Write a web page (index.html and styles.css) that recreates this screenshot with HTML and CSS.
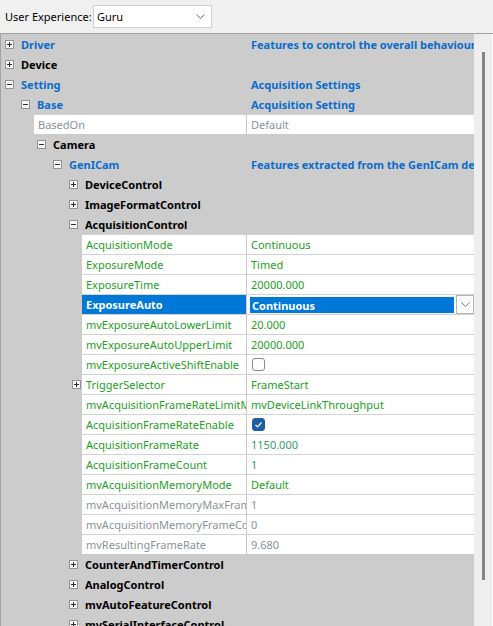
FILE: index.html
```html
<!DOCTYPE html>
<html>
<head>
<meta charset="utf-8">
<link rel="stylesheet" href="styles.css">
</head>
<body>
<svg class="defs" width="0" height="0">
  <symbol id="plus" viewBox="0 0 9 9"><rect x="0.5" y="0.5" width="8" height="8" fill="#f6f6f6" stroke="#939393"/><path d="M2 4.5h5M4.5 2v5" stroke="#2b2b2b"/></symbol>
  <symbol id="minus" viewBox="0 0 9 9"><rect x="0.5" y="0.5" width="8" height="8" fill="#f6f6f6" stroke="#939393"/><path d="M2 4.5h5" stroke="#2b2b2b"/></symbol>
</svg>
<div class="toolbar">
  <span class="label">User Experience:</span>
  <div class="combo"><span>Guru</span><svg class="chev" width="9" height="6" viewBox="0 0 9 6"><path d="M0.5 0.5l4 4 4-4" fill="none" stroke="#6e6e6e"/></svg></div>
</div>
<div class="tree">
  <div class="rows">
    <div class="row cat l0 blue"><div class="name"><svg class="exp"><use href="#plus"/></svg>Driver</div><div class="value">Features to control the overall behaviour of the driver</div></div>
    <div class="row cat l0"><div class="name"><svg class="exp"><use href="#plus"/></svg>Device</div><div class="value"></div></div>
    <div class="row cat l0 blue"><div class="name"><svg class="exp"><use href="#minus"/></svg>Setting</div><div class="value">Acquisition Settings</div></div>
    <div class="row cat l1 blue"><div class="name"><svg class="exp"><use href="#minus"/></svg>Base</div><div class="value">Acquisition Setting</div></div>
    <div class="row prop p2 ro"><div class="gutter"></div><div class="name">BasedOn</div><div class="value">Default</div></div>
    <div class="row cat l2"><div class="name"><svg class="exp"><use href="#minus"/></svg>Camera</div><div class="value"></div></div>
    <div class="row cat l3 blue"><div class="name"><svg class="exp"><use href="#minus"/></svg>GenICam</div><div class="value">Features extracted from the GenICam description</div></div>
    <div class="row cat l4"><div class="name"><svg class="exp"><use href="#plus"/></svg>DeviceControl</div><div class="value"></div></div>
    <div class="row cat l4"><div class="name"><svg class="exp"><use href="#plus"/></svg>ImageFormatControl</div><div class="value"></div></div>
    <div class="row cat l4"><div class="name"><svg class="exp"><use href="#minus"/></svg>AcquisitionControl</div><div class="value"></div></div>
    <div class="row prop p5"><div class="gutter"></div><div class="name">AcquisitionMode</div><div class="value">Continuous</div></div>
    <div class="row prop p5"><div class="gutter"></div><div class="name">ExposureMode</div><div class="value">Timed</div></div>
    <div class="row prop p5"><div class="gutter"></div><div class="name">ExposureTime</div><div class="value">20000.000</div></div>
    <div class="row prop p5 selected"><div class="gutter"></div><div class="name">ExposureAuto</div><div class="value"><div class="edit">Continuous</div><div class="dropbtn"><svg width="9" height="6" viewBox="0 0 9 6"><path d="M0.5 0.5l4 4 4-4" fill="none" stroke="#7a7a7a"/></svg></div></div></div>
    <div class="row prop p5"><div class="gutter"></div><div class="name">mvExposureAutoLowerLimit</div><div class="value">20.000</div></div>
    <div class="row prop p5"><div class="gutter"></div><div class="name">mvExposureAutoUpperLimit</div><div class="value">20000.000</div></div>
    <div class="row prop p5"><div class="gutter"></div><div class="name">mvExposureActiveShiftEnable</div><div class="value"><span class="check"></span></div></div>
    <div class="row prop p5"><div class="gutter"><svg class="exp"><use href="#plus"/></svg></div><div class="name">TriggerSelector</div><div class="value">FrameStart</div></div>
    <div class="row prop p5"><div class="gutter"></div><div class="name">mvAcquisitionFrameRateLimitMode</div><div class="value">mvDeviceLinkThroughput</div></div>
    <div class="row prop p5"><div class="gutter"></div><div class="name">AcquisitionFrameRateEnable</div><div class="value"><span class="check on"><svg width="13" height="13" viewBox="0 0 13 13"><path d="M3.5 6.8l2 2 4-4.3" fill="none" stroke="#fff" stroke-width="1.2"/></svg></span></div></div>
    <div class="row prop p5"><div class="gutter"></div><div class="name">AcquisitionFrameRate</div><div class="value teal">1150.000</div></div>
    <div class="row prop p5"><div class="gutter"></div><div class="name">AcquisitionFrameCount</div><div class="value teal">1</div></div>
    <div class="row prop p5"><div class="gutter"></div><div class="name">mvAcquisitionMemoryMode</div><div class="value">Default</div></div>
    <div class="row prop p5 ro"><div class="gutter"></div><div class="name">mvAcquisitionMemoryMaxFrameCount</div><div class="value">1</div></div>
    <div class="row prop p5 ro"><div class="gutter"></div><div class="name">mvAcquisitionMemoryFrameCount</div><div class="value">0</div></div>
    <div class="row prop p5 ro"><div class="gutter"></div><div class="name">mvResultingFrameRate</div><div class="value">9.680</div></div>
    <div class="row cat l4"><div class="name"><svg class="exp"><use href="#plus"/></svg>CounterAndTimerControl</div><div class="value"></div></div>
    <div class="row cat l4"><div class="name"><svg class="exp"><use href="#plus"/></svg>AnalogControl</div><div class="value"></div></div>
    <div class="row cat l4"><div class="name"><svg class="exp"><use href="#plus"/></svg>mvAutoFeatureControl</div><div class="value"></div></div>
    <div class="row cat l4"><div class="name"><svg class="exp"><use href="#plus"/></svg>mvSerialInterfaceControl</div><div class="value"></div></div>
  </div>
  <div class="scroll"><div class="thumb"></div></div>
</div>
</body>
</html>
```
FILE: styles.css
```css
html, body {
  margin: 0;
  padding: 0;
}
body {
  width: 493px;
  height: 626px;
  overflow: hidden;
  background: #f0f0f0;
  font-family: "Noto Sans", "DejaVu Sans", sans-serif;
  font-size: 11px;
  color: #000;
}
.defs {
  position: absolute;
  width: 0;
  height: 0;
}
.toolbar {
  height: 33px;
  display: flex;
  align-items: center;
  padding-left: 5px;
  box-sizing: border-box;
}
.label {
  width: 88px;
  white-space: nowrap;
}
.combo {
  width: 119px;
  height: 23px;
  box-sizing: border-box;
  border: 1px solid #d0d0d0;
  background: #fff;
  display: flex;
  align-items: center;
  justify-content: space-between;
  padding: 0 6px 0 3px;
}
.chev {
  display: block;
}
.tree {
  display: flex;
  height: 593px;
  border-top: 1px solid #a3a3a3;
  border-left: 1px solid #a3a3a3;
  box-sizing: border-box;
}
.rows {
  width: 473px;
  flex: none;
  background: #cccccc;
  overflow: hidden;
}
.scroll {
  width: 19px;
  flex: none;
  background: #eeeeee;
  border-right: 1px solid #ffffff;
  box-sizing: border-box;
  padding-top: 18px;
  padding-left: 8px;
}
.thumb {
  width: 3px;
  height: 528px;
  background: #858585;
}
.row {
  display: flex;
  height: 20px;
  white-space: nowrap;
}
.name {
  flex: 1;
  min-width: 0;
  display: flex;
  align-items: center;
  overflow: hidden;
}
.value {
  width: 228px;
  flex: none;
  display: flex;
  align-items: center;
  overflow: hidden;
  box-sizing: border-box;
}
.exp {
  width: 9px;
  height: 9px;
  flex: none;
  shape-rendering: crispEdges;
}
.cat .name {
  font-weight: bold;
}
.cat .exp {
  margin-right: 7px;
}
.cat .value {
  padding-left: 5px;
  font-weight: bold;
}
.blue .name, .blue .value {
  color: #0a6dcc;
}
.l0 .name { padding-left: 4px; }
.l1 .name { padding-left: 20px; }
.l2 .name { padding-left: 36px; }
.l3 .name { padding-left: 52px; }
.l4 .name { padding-left: 68px; }

.gutter {
  flex: none;
  display: flex;
  align-items: center;
  justify-content: flex-end;
  padding-right: 1px;
  box-sizing: border-box;
}
.p2 .gutter { width: 33px; }
.p5 .gutter { width: 81px; }
.prop .name, .prop .value {
  background: #fff;
  border-top: 1px solid #d3d3d3;
  color: #22a022;
}
.prop .name {
  padding-left: 4px;
}
.prop .value {
  border-left: 1px solid #cbcbcb;
  padding-left: 4px;
}
.prop .value.teal {
  color: #3a9a6a;
}
.ro .name, .ro .value {
  color: #8a9297;
}
.selected .name {
  background: #0078d7;
  color: #fff;
  font-weight: bold;
}
.selected .value {
  padding-left: 3px;
}
.edit {
  width: 204px;
  height: 16px;
  margin-top: 1px;
  background: #0078d7;
  color: #fff;
  font-weight: bold;
  display: flex;
  align-items: center;
  padding-left: 2px;
  box-sizing: border-box;
}
.dropbtn {
  width: 18px;
  height: 19px;
  margin-left: 2px;
  box-sizing: border-box;
  border: 1px solid #b4b4b4;
  background: #fff;
  display: flex;
  align-items: center;
  justify-content: center;
}
.dropbtn svg {
  display: block;
}
.check {
  width: 13px;
  height: 13px;
  margin-left: 1px;
  box-sizing: border-box;
  border: 1px solid #8a8a8a;
  border-radius: 3px;
  background: #fff;
  display: block;
}
.check.on {
  background: #1b5fa6;
  border-color: #1b5fa6;
}
.check.on svg {
  display: block;
  margin: -1px;
}
```
